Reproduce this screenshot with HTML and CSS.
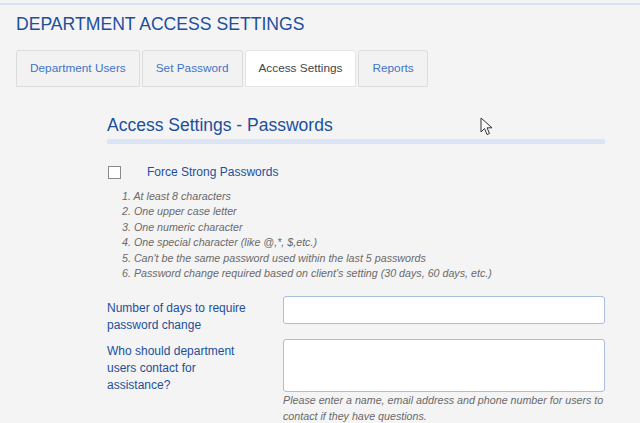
FILE: index.html
```html
<!DOCTYPE html>
<html>
<head>
<meta charset="utf-8">
<link rel="stylesheet" href="styles.css">
</head>
<body>
<div class="page">
  <h1 class="title">DEPARTMENT ACCESS SETTINGS</h1>
  <div class="tabs">
    <div class="tab">Department Users</div>
    <div class="tab">Set Password</div>
    <div class="tab active">Access Settings</div>
    <div class="tab">Reports</div>
  </div>
  <div class="content">
    <h2 class="section">Access Settings - Passwords</h2>
    <div class="check-row">
      <span class="checkbox"></span>
      <span class="check-label">Force Strong Passwords</span>
    </div>
    <ol class="rules">
      <li>1. At least 8 characters</li>
      <li>2. One upper case letter</li>
      <li>3. One numeric character</li>
      <li>4. One special character (like @,*, $,etc.)</li>
      <li>5. Can't be the same password used within the last 5 passwords</li>
      <li>6. Password change required based on client's setting (30 days, 60 days, etc.)</li>
    </ol>
    <div class="field">
      <label class="label">Number of days to require password change</label>
      <div class="control"><div class="input"></div></div>
    </div>
    <div class="field second">
      <label class="label">Who should department users contact for assistance?</label>
      <div class="control">
        <div class="textarea"></div>
        <div class="help">Please enter a name, email address and phone number for users to contact if they have questions.</div>
      </div>
    </div>
  </div>
  <svg class="cursor" width="14" height="20" viewBox="0 0 14 20">
    <path d="M1 1 L1 15 L4.5 11.5 L7 17.5 L9.5 16.5 L7 10.8 L12 10.8 Z" fill="#fff" stroke="#333" stroke-width="1" stroke-linejoin="round"/>
  </svg>
</div>
</body>
</html>
```
FILE: styles.css
```css
html, body {
  margin: 0;
  padding: 0;
  background: #f4f4f4;
}
body {
  font-family: "Liberation Sans", Arial, sans-serif;
  width: 640px;
  height: 423px;
  overflow: hidden;
}
.page {
  position: relative;
  margin-top: 3px;
  border-top: 2px solid #d9e2f1;
  padding: 0 16px;
  height: 418px;
  background: #f4f4f4;
}
.title {
  margin: 0;
  padding-top: 8px;
  font-size: 17.6px;
  font-weight: normal;
  color: #1c4f9c;
  line-height: 22px;
}
.tabs {
  display: flex;
  gap: 2px;
  margin-top: 15px;
}
.tab {
  height: 37px;
  line-height: 35px;
  padding: 0 13px;
  font-size: 11.8px;
  color: #3f74c9;
  border: 1px solid #dcdcdc;
  border-radius: 3px 3px 0 0;
  background: #f2f2f2;
  box-sizing: border-box;
}
.tab.active {
  background: #fff;
  color: #444;
  border-color: #e4e4e4;
}
.content {
  margin-left: 91px;
  width: 498px;
}
.section {
  margin: 27px 0 0 0;
  font-size: 17.5px;
  font-weight: normal;
  color: #1c4f9c;
  line-height: 22px;
  padding-bottom: 3px;
  border-bottom: 5px solid #dbe5f5;
}
.check-row {
  display: flex;
  align-items: center;
  margin-top: 20px;
  height: 16px;
}
.checkbox {
  width: 11px;
  height: 11px;
  border: 1px solid #8a8a8a;
  background: #fff;
  margin-left: 1px;
}
.check-label {
  margin-left: 26px;
  font-size: 12px;
  color: #1c4f9c;
}
.rules {
  list-style: none;
  margin: 9px 0 0 15px;
  padding: 0;
  font-size: 10.7px;
  font-style: italic;
  color: #6a6a6a;
  line-height: 15.4px;
}
.field {
  display: flex;
  margin-top: 15px;
}
.field.second {
  margin-top: 5px;
}
.label {
  width: 150px;
  margin-right: 26px;
  font-size: 12px;
  line-height: 17px;
  color: #1c4f9c;
  padding-top: 4px;
}
.control {
  flex: 1;
}
.input {
  height: 28px;
  background: #fff;
  border: 1px solid #a9bfe0;
  border-radius: 3px;
  box-sizing: border-box;
}
.textarea {
  height: 53px;
  background: #fff;
  border: 1px solid #a9bfe0;
  border-radius: 3px;
  box-sizing: border-box;
}
.help {
  font-size: 10.7px;
  font-style: italic;
  color: #6a6a6a;
  line-height: 15.5px;
  margin-top: 1px;
}
.cursor {
  position: absolute;
  left: 480px;
  top: 112px;
}
```
